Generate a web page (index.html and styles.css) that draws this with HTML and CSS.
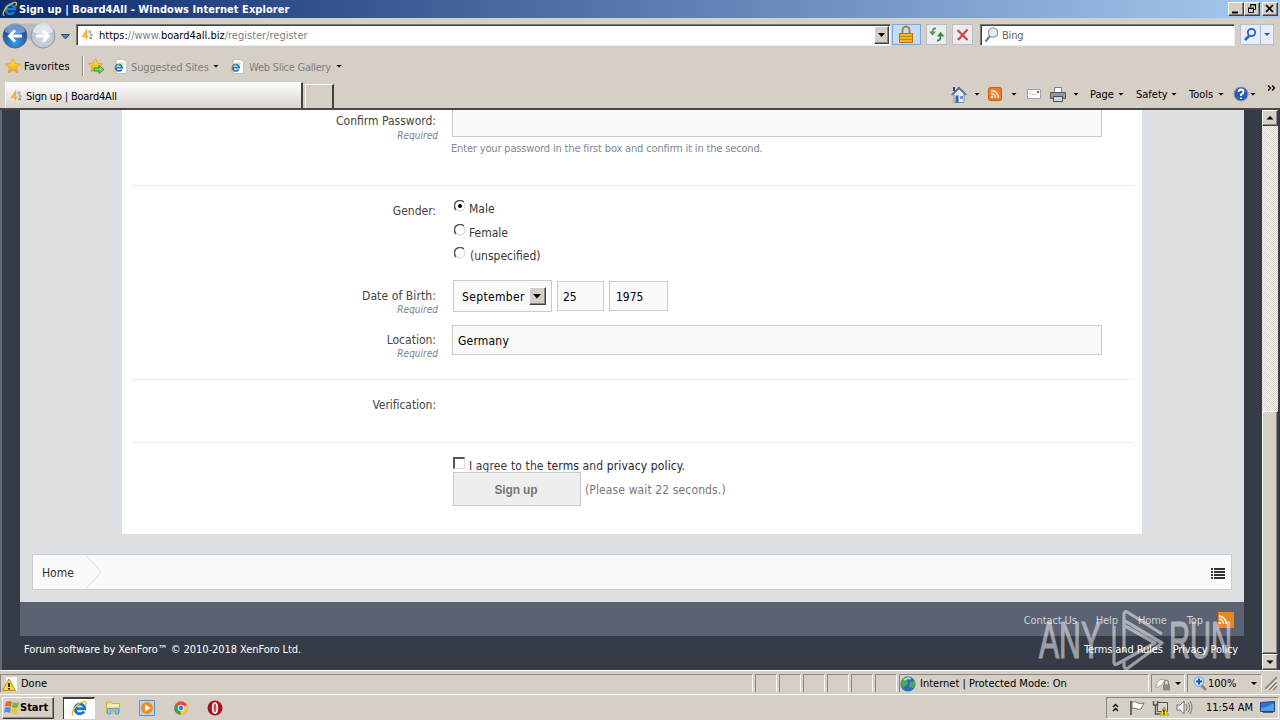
FILE: index.html
```html
<!DOCTYPE html>
<html lang="en">
<head>
<meta charset="utf-8">
<title>Sign up | Board4All</title>
<link rel="stylesheet" href="styles.css">
</head>
<body>
<svg class="defs" width="0" height="0">
  <defs>
    <radialGradient id="blue" cx=".5" cy=".75" r=".7"><stop offset="0" stop-color="#39a0ee"/><stop offset="1" stop-color="#173f86"/></radialGradient>
    <radialGradient id="grey" cx=".5" cy=".6" r=".6"><stop offset="0" stop-color="#d3d9e4"/><stop offset="1" stop-color="#b5bdcb"/></radialGradient>
    <linearGradient id="gold" x2="0" y2="1"><stop offset="0" stop-color="#fff04d"/><stop offset="1" stop-color="#f59a17"/></linearGradient>
    <symbol id="ie" viewBox="0 0 16 16"><path d="M12.2 10.8a4.6 4.6 0 1 1 .7-2.6H5" fill="none" stroke="#1c77c9" stroke-width="2.7"/><path d="M2.4 14.8C-.8 13 3 6.500 8.500 3c3.500-2.200 6-2.300 6-.3 0 .8-.4 1.700-.8 2.400" fill="none" stroke="#e9b82c" stroke-width="1.300"/></symbol>
    <symbol id="iepage" viewBox="0 0 16 16"><path d="M3.500.5h8l3 3v12h-11z" fill="#fff" stroke="#b9bec8"/><svg x="0" y="3" width="12" height="12" viewBox="0 0 16 16"><use href="#ie"/></svg></symbol>
    <symbol id="star" viewBox="0 0 16 16"><path d="M8 .8l2.200 4.700 5.200.7-3.800 3.600 1 5.200L8 12.400 3.400 15l1-5.200L.6 6.200l5.200-.7z" fill="url(#gold)" stroke="#e2a13a"/></symbol>
    <symbol id="site" viewBox="0 0 12 12"><path d="M4.800 11V1.500L1 7.500h6" fill="none" stroke="#f0b23a" stroke-width="1.800"/><circle cx="8.500" cy="2.500" r="1.300" fill="none" stroke="#8595ac"/><circle cx="10" cy="6" r="1.300" fill="none" stroke="#8595ac"/><path d="M8 9.500h3" stroke="#8595ac" stroke-width="2"/></symbol>
    <symbol id="rss" viewBox="0 0 14 14"><rect x=".5" y=".5" width="13" height="13" rx="2" fill="#ef7a22" stroke="#cf5c12"/><circle cx="4" cy="10" r="1.300" fill="#fff"/><path d="M3 6.500A4.500 4.500 0 0 1 7.500 11M3 3.500A7.500 7.500 0 0 1 10.500 11" fill="none" stroke="#fff" stroke-width="1.400"/></symbol>
  </defs>
</svg>

<header class="titlebar">
  <svg class="title-icon" width="16" height="16"><use href="#ie"/></svg>
  <span class="title-text">Sign up | Board4All - Windows Internet Explorer</span>
  <div class="win-buttons">
    <svg width="16" height="14" class="raised"><path d="M3 9.500h6" stroke="#000" stroke-width="2"/></svg>
    <svg width="16" height="14" class="raised"><path d="M5.500 4V1.500h5v5H9M5 2h6M3.500 5.500h5v4h-5zM3 5h6" fill="none" stroke="#000"/></svg>
    <svg width="16" height="14" class="raised close"><path d="M3 2l7 7M10 2L3 9" stroke="#000" stroke-width="1.700"/></svg>
  </div>
</header>

<nav class="navbar">
  <svg class="backfwd" width="72" height="30" viewBox="0 0 72 30">
    <path d="M8 6Q14 3 20 4.500h18q8-1 12 4v12H8z" fill="#b9bac0"/>
    <circle cx="15" cy="17" r="12" fill="url(#blue)" stroke="#536b95"/><path d="M5 13a10 9 0 0 1 20 0q-10 4-20 0" fill="#9bbde8" opacity=".65"/><path d="M22 17H10M15 11.500L9.500 17l5.500 5.500" fill="none" stroke="#fff" stroke-width="2.800"/>
    <circle cx="43" cy="17" r="12" fill="url(#grey)" stroke="#8d97a9"/><path d="M33 13a10 9 0 0 1 20 0q-10 4-20 0" fill="#f3f5f9" opacity=".7"/><path d="M36 17h12M43 11.500l5.500 5.500-5.500 5.500" fill="none" stroke="#fff" stroke-width="2.800"/>
    <path d="M61.500 15.500h8l-4 4.500z" fill="#4a8bc4" stroke="#234e7c"/>
  </svg>
  <div class="address sunken">
    <svg class="addr-icon" width="11" height="12"><use href="#site"/></svg>
    <span class="url"><b>https:</b>//www.<b>board4all.biz</b>/register/register</span>
    <svg class="drop raised" width="15" height="18"><path d="M3 6h7L6.500 10z"/></svg>
  </div>
  <svg class="tool lock" width="29" height="21" viewBox="0 0 29 21"><path d="M10.500 10V6.500a3.500 4 0 0 1 7 0V10" fill="none" stroke="#a7863a" stroke-width="2"/><rect x="7.500" y="9.500" width="13" height="9" fill="#eeb42d" stroke="#b37710"/><path d="M8 12.500h12M8 15.500h12" stroke="#c18718"/></svg>
  <svg class="tool" width="21" height="21" viewBox="0 0 21 21"><path d="M10 4.500Q6.500 4 6.500 8" fill="none" stroke="#4d9a51" stroke-width="1.800"/><path d="M3 7.500h7L6.500 11.500z" fill="#4d9a51"/><path d="M11 16.500q3.500.5 3.500-4" fill="none" stroke="#2c8732" stroke-width="1.800"/><path d="M11 12.500h7.500L14.500 8z" fill="#2c8732"/></svg>
  <svg class="tool" width="21" height="21" viewBox="0 0 21 21"><path d="M5.500 6l10 10M15.500 5.500L6 16" stroke="#cf4b4b" stroke-width="2.400"/></svg>
  <div class="search sunken">
    <svg width="15" height="16" viewBox="0 0 15 16"><path d="M6 9l-4.500 5.500" stroke="#6e747e" stroke-width="2"/><circle cx="9" cy="5.500" r="4.600" fill="#e3eff7" stroke="#8e96a2" stroke-width="1.300"/></svg>
    <span class="bing">Bing</span>
  </div>
  <svg class="tool go" width="34" height="21" viewBox="0 0 34 21"><path d="M9 12l-4 4" stroke="#2a63bd" stroke-width="2.500"/><circle cx="11.500" cy="8.500" r="3.700" fill="#e4eefa" stroke="#2a63bd" stroke-width="1.800"/><path d="M20.500 0v21" stroke="#a6bede"/><path d="M24 9h6l-3 3z" fill="#255da7"/></svg>
</nav>

<div class="favbar">
  <svg class="fav-star" width="16" height="16"><use href="#star"/></svg>
  <span class="fav-text">Favorites</span>
  <i class="fav-sep"></i>
  <svg class="fav-add" width="17" height="17" viewBox="0 0 17 17"><use href="#star" width="15" height="15"/><path d="M6 10h5V7.500l5 4-5 4V13H6z" fill="#7fdc55" stroke="#2d9429"/></svg>
  <svg class="fav-page" width="15" height="15"><use href="#iepage"/></svg>
  <span class="sug-text">Suggested Sites</span>
  <i class="caret"></i>
  <svg class="web-page" width="15" height="15"><use href="#iepage"/></svg>
  <span class="web-text">Web Slice Gallery</span>
  <i class="caret"></i>
</div>

<div class="tabbar">
  <div class="tab"><svg width="11" height="12"><use href="#site"/></svg><span class="tab-text">Sign up | Board4All</span></div>
  <div class="newtab"></div>
  <div class="commands">
    <svg class="c-home" width="16" height="17" viewBox="0 0 16 17"><path d="M3 8v8.500h10V8L8 3z" fill="#e8edf6" stroke="#7d8dab"/><path d="M.7 9L8 1.500 15.300 9" fill="none" stroke="#5268a3" stroke-width="1.500"/><path d="M3 1v4" stroke="#35448a" stroke-width="2"/><path d="M4.500 9.500h3v7h-3z" fill="#3267a8"/><path d="M9 10h3v3H9z" fill="#7798bd"/></svg>
    <i class="caret"></i>
    <svg class="c-rss" width="14" height="14"><use href="#rss"/></svg>
    <i class="caret"></i>
    <svg class="c-mail" width="15" height="11" viewBox="0 0 15 11"><rect x=".5" y=".5" width="13" height="9" fill="#fcfcfc" stroke="#a5a6ad"/><path d="M2 4l5 2 2-1" fill="none" stroke="#c4c8d0"/><path d="M10 2h2v2h-2z" fill="#c64747"/></svg>
    <svg class="c-print" width="16" height="15" viewBox="0 0 16 15"><path d="M4.500.5h7v5h-7z" fill="#fff" stroke="#7b8085"/><path d="M.5 5.500h15v6H.5z" fill="#92989f" stroke="#555a60"/><path d="M3.500 9.500h9v5h-9z" fill="#cdd8e4" stroke="#484e55"/></svg>
    <i class="caret"></i>
    <span class="c-page">Page</span><i class="caret"></i>
    <span class="c-safety">Safety</span><i class="caret"></i>
    <span class="c-tools">Tools</span><i class="caret"></i>
    <svg class="c-help" width="16" height="16" viewBox="0 0 16 16"><circle cx="8" cy="8" r="7" fill="#2d5caf" stroke="#8396bb"/><path d="M5.500 6q0-2.500 2.500-2.500T10.500 6q0 1.500-2.500 2.500v1.500M8 11.500v1.500" fill="none" stroke="#fff" stroke-width="1.800"/></svg>
    <i class="caret"></i>
    <svg class="c-more" width="9" height="6"><path d="M1 .5L3.500 3 1 5.500M5 .5L7.500 3 5 5.500" fill="none" stroke="#000" stroke-width="1.300"/></svg>
  </div>
</div>

<main class="viewport">
  <div class="page">
    <form class="panel">
      <section class="sec s-pass">
        <div class="labels"><label class="label t-confirm">Confirm Password:</label><em>Required</em></div>
        <div class="controls"><div class="field wide cut"></div><p class="hint">Enter your password in the first box and confirm it in the second.</p></div>
      </section>
      <section class="sec s-info">
        <div class="labels"><label class="label t-gender">Gender:</label></div>
        <div class="controls radios">
          <div class="option"><svg width="12" height="12" viewBox="0 0 12 12"><circle cx="6" cy="6" r="5" fill="#fff" stroke="#d3d1cc"/><path d="M2 10A5.200 5.200 0 0 1 9.800 2" fill="none" stroke="#505050" stroke-width="1.400"/><circle cx="6" cy="6" r="2" fill="#000"/></svg><span class="t-male">Male</span></div>
          <div class="option"><svg width="12" height="12" viewBox="0 0 12 12"><circle cx="6" cy="6" r="5" fill="#fff" stroke="#d3d1cc"/><path d="M2 10A5.200 5.200 0 0 1 9.800 2" fill="none" stroke="#505050" stroke-width="1.400"/></svg><span class="t-female">Female</span></div>
          <div class="option"><svg width="12" height="12" viewBox="0 0 12 12"><circle cx="6" cy="6" r="5" fill="#fff" stroke="#d3d1cc"/><path d="M2 10A5.200 5.200 0 0 1 9.800 2" fill="none" stroke="#505050" stroke-width="1.400"/></svg><span class="t-unspec">(unspecified)</span></div>
        </div>
        <div class="labels"><label class="label t-dob">Date of Birth:</label><em>Required</em></div>
        <div class="controls dob">
          <div class="field month"><span class="t-month">September</span><svg class="raised" width="17" height="18"><path d="M3 6h8L7 10.500z"/></svg></div>
          <div class="field day">25</div>
          <div class="field year">1975</div>
        </div>
        <div class="labels"><label class="label t-loc">Location:</label><em>Required</em></div>
        <div class="controls"><div class="field wide loc"><span class="t-germany">Germany</span></div></div>
      </section>
      <section class="sec s-ver">
        <div class="labels"><label class="label t-ver">Verification:</label></div>
      </section>
      <section class="s-submit">
        <div class="agree"><i class="check"></i><span class="t-agree">I agree to the <a>terms</a> and <a>privacy policy</a>.</span></div>
        <div class="submit"><div class="button"><span class="t-sign">Sign up</span></div><span class="t-wait">(Please wait 22 seconds.)</span></div>
      </section>
    </form>
    <div class="crumbs">
      <span class="t-home">Home</span>
      <svg class="crumb-arrow" width="20" height="34" viewBox="0 0 20 34"><path d="M1.500 0l16 17-16 17" fill="none" stroke="#d8dbde"/></svg>
      <svg class="list" width="14" height="11" viewBox="0 0 14 11"><path d="M0 1h2M3 1h11M0 4h2M3 4h11M0 7h2M3 7h11M0 10h2M3 10h11" stroke="#333" stroke-width="2"/></svg>
    </div>
    <footer class="footer">
      <span class="f-contact">Contact Us</span><span class="f-help">Help</span><span class="f-home">Home</span><span class="f-top">Top</span>
      <svg width="16" height="16" viewBox="0 0 16 16"><path d="M0 0h16v16H0z" fill="#e98a20"/><circle cx="1.800" cy="11" r="1.200" fill="#fff"/><path d="M1 7a5 5 0 0 1 4.500 5M1 4a8 8 0 0 1 7.300 8" fill="none" stroke="#fff" stroke-width="1.500"/></svg>
    </footer>
    <div class="legal"><span class="l-forum">Forum software by XenForo™ © 2010-2018 XenForo Ltd.</span><span class="l-terms">Terms and Rules</span><span class="l-priv">Privacy Policy</span></div>
  </div>
  <div class="scroll">
    <svg class="raised" width="16" height="16"><path d="M3.500 8.500h7L7 5z"/></svg>
    <div class="track"></div>
    <div class="thumb"></div>
    <svg class="raised" width="16" height="16"><path d="M3.500 5.500h7L7 9z"/></svg>
  </div>
  <div class="watermark">
    <span class="w-any">ANY</span>
    <svg width="62" height="62" viewBox="0 0 62 62"><path d="M9 17V53Q9 57 12 55L50 34L20 17M19 43V6Q19 1 23 3.500L57 25M20 12L57 34L23 59Q20 61 19 57V52" fill="none" stroke="#fff" stroke-width="3.200" stroke-linejoin="round"/></svg>
    <span class="w-run">RUN</span>
  </div>
</main>

<div class="status">
  <div class="cell done"><svg width="16" height="16" viewBox="0 0 16 16"><path d="M4 1h11v14H4z" fill="#fff"/><path d="M7 3l6.500 11.500H.5z" fill="#f7df28" stroke="#ad9419"/><path d="M7 7v4M7 12v1.500" stroke="#000" stroke-width="1.600"/></svg><span class="st-done">Done</span></div>
  <div class="cell small"></div><div class="cell small"></div><div class="cell small"></div><div class="cell small"></div><div class="cell small"></div><div class="cell small"></div>
  <div class="cell zone"><svg width="16" height="16" viewBox="0 0 16 16"><circle cx="8" cy="8" r="7.500" fill="#286ebb"/><path d="M2 3.500Q6-.5 10 1.500L7 5l1 3-5 4Q0 8 2 3.500M10 6l5-1q1 4-2 7l-4-1z" fill="#4dab54"/><path d="M4 4q4-3 7-1" stroke="#b8e8f4" fill="none" stroke-width="1.500"/></svg><span class="st-zone">Internet | Protected Mode: On</span></div>
  <div class="cell priv"><svg width="18" height="16" viewBox="0 0 18 16"><path d="M1 12C1 5 5 2 10 4l-3 5z" fill="#f4f4f2" stroke="#a5a5a3"/><path d="M9.500 9V6.500a2 2.500 0 0 1 4 0V9" fill="none" stroke="#777"/><path d="M8 8.500h7v6H8z" fill="#8a8a89"/></svg><i class="caret"></i></div>
  <div class="cell zoom"><svg width="15" height="15" viewBox="0 0 15 15"><path d="M8 9l5 5" stroke="#9b835b" stroke-width="2.500"/><circle cx="6" cy="5.500" r="4.800" fill="#cde7fa" stroke="#6e9cc9"/><path d="M3 5.500h6M6 2.500v6" stroke="#135bb0" stroke-width="2"/></svg><span class="st-zoom">100%</span><i class="caret"></i></div>
  <svg class="grip" width="12" height="16"><path d="M0 14L12 2M4 15l8-8M8 15l4-4" stroke="#878580" stroke-width="1.700"/><path d="M2 15L12 5M6 15l6-6" stroke="#fff"/></svg>
</div>

<div class="taskbar">
  <div class="start raised"><svg width="16" height="16" viewBox="0 0 16 16"><path d="M2 2q3-2 6 0L7 7Q4 5 1 7z" fill="#e56a30"/><path d="M9 2q3 2 6 0l-1 5q-3 2-6 0z" fill="#75b83d"/><path d="M1 8q3-2 6 0l-1 5q-3-2-6 0z" fill="#4a94dc"/><path d="M8 8q3 2 6 0l-1 5q-3 2-6 0z" fill="#f2c42c"/></svg><span class="start-text">Start</span></div>
  <div class="active-task"><svg width="17" height="17" viewBox="0 0 16 16"><use href="#ie"/></svg></div>
  <svg class="t-folder" width="16" height="16" viewBox="0 0 16 16"><path d="M1.500 2h5l1 1.500h7V13h-13z" fill="#f4dc7f" stroke="#cfac50"/><path d="M3 5.500h11" stroke="#fff6c8" stroke-width="2"/><path d="M2.500 14V8.500h11V14h-3v-3h-5v3z" fill="#8bc4e8" stroke="#61a0cc"/></svg>
  <svg class="t-media" width="16" height="16" viewBox="0 0 16 16"><path d="M.5.5h15v15H.5z" fill="#b7d6f0" stroke="#5f91bf"/><circle cx="8" cy="8" r="6" fill="#f48a19"/><path d="M6 4.500L11.500 8 6 11.500z" fill="#fff"/></svg>
  <svg class="t-chrome" width="14" height="14" viewBox="0 0 14 14"><circle cx="7" cy="7" r="6.700" fill="#e64b3c"/><path d="M7 7L1.200 3.600A6.700 6.700 0 0 0 6.500 13.700z" fill="#35a353"/><path d="M7 7l6-3a6.700 6.700 0 0 1-6.500 9.700z" fill="#f7cf3a"/><circle cx="7" cy="7" r="3.200" fill="#fff"/><circle cx="7" cy="7" r="2.400" fill="#477fe0"/></svg>
  <svg class="t-opera" width="16" height="16" viewBox="0 0 16 16"><circle cx="8" cy="8" r="7.500" fill="#a5141b"/><ellipse cx="8" cy="8" rx="2.300" ry="5" fill="#d54c50" stroke="#fff" stroke-width="1.700"/></svg>
  <div class="tray">
    <svg class="chev" width="7" height="9"><path d="M1 4L3.500 1.500 6 4M1 8l2.500-2.500L6 8" fill="none" stroke="#000" stroke-width="1.400"/></svg>
    <svg class="flag" width="17" height="16" viewBox="0 0 17 16"><path d="M2 1v14" stroke="#666" stroke-width="2"/><path d="M3 2q4-1 6 1 2 1 6 0l-3 6q-3 1-5-.5-2-1-4 0z" fill="#fff" stroke="#777"/></svg>
    <svg class="net" width="17" height="16" viewBox="0 0 17 16"><path d="M5.500 2.500h10v9h-10z" fill="#d5d5d5" stroke="#555"/><path d="M1.500 1v4h4V1M3.500 5v9h5" fill="none" stroke="#555" stroke-width="1.500"/><path d="M8 15l4-8 4.500 8z" fill="#f5df28" stroke="#b19716"/><path d="M12 9.500v3M12 13v1.200" stroke="#000" stroke-width="1.300"/></svg>
    <svg class="sound" width="17" height="15" viewBox="0 0 17 15"><path d="M1 5h3l4-4v13l-4-4H1z" fill="#fff" stroke="#6d6d6d"/><path d="M10 4q2 3.500 0 7M12 2.500q3.500 5 0 10M14 1q4 6.500 0 13" fill="none" stroke="#777"/></svg>
    <span class="clock">11:54 AM</span>
    <svg class="desk" width="15" height="13" viewBox="0 0 15 13"><path d="M.5 1.500l14-1v10h-14z" fill="#2873c6" stroke="#174987"/><path d="M1 7q7-1 13-5v8H1z" fill="#549ce4"/><path d="M3 11.500h10" stroke="#465e7a"/></svg>
  </div>
</div>
</body>
</html>
```
FILE: styles.css
```css
* { box-sizing: border-box; }
body { margin: 0; width: 1280px; height: 720px; overflow: hidden; background: #d5cfc6; color: #000; font: 11px/14px "DejaVu Sans Condensed", "DejaVu Sans", sans-serif; font-stretch: condensed; }
svg { display: block; flex: none; }
span, label, em, p { white-space: nowrap; flex: none; display: block; }
.defs { position: absolute; }
.raised { background: #d5cfc6; border: 1px solid; border-color: #fff #404040 #404040 #fff; box-shadow: inset -1px -1px #8b8780; }
.sunken { background: #fff; border: 1px solid; border-color: #777 #eee #eee #777; box-shadow: inset 1px 1px #404040; }
.caret { width: 6px; height: 3px; flex: none; background: #000; clip-path: polygon(0 0, 100% 0, 50% 100%); }

.titlebar { height: 18px; background: linear-gradient(90deg, #0c2a6c, #a6caf0); display: flex; align-items: center; padding: 0 2px; }
.title-icon { margin-right: 1px; }
.title-text { width: 271px; color: #fff; font-weight: bold; letter-spacing: .06px; padding-top: 1px; }
.win-buttons { margin-left: auto; display: flex; }
.close { margin-left: 2px; }

.navbar { height: 34px; display: flex; align-items: center; padding-bottom: 1px; }
.backfwd { margin-bottom: 1px; width: 72px; }
.address { margin-left: 4px; width: 815px; height: 22px; display: flex; align-items: center; }
.addr-icon { margin: 0 6px 0 5px; }
.url { color: #808080; margin-top: 2px; }
.url b { font-weight: normal; color: #000; }
.drop { margin-left: auto; margin-right: 1px; }
.tool { margin-left: 7px; background: #ebecee; outline: 1px solid #b7bfcd; outline-offset: -1px; }
.lock { margin-left: 1px; background: #c5dcfa; outline-color: #7da5dc; }
.navbar .lock + .tool { margin-left: 5px; }
.navbar .lock + .tool + .tool { margin-left: 5px; }
.search { margin-left: 7px; width: 255px; height: 22px; display: flex; align-items: center; padding-left: 3px; }
.bing { margin: 3px 0 0 3px; color: #666; letter-spacing: -.2px; }
.go { margin-left: 5px; background: #e6edf6; }

.favbar { height: 28px; display: flex; align-items: center; padding-left: 5px; }
.fav-text { margin-left: 3px; width: 58px; letter-spacing: .12px; padding-top: 1px; }
.fav-sep { width: 2px; height: 20px; border-left: 1px solid #8e8a84; border-right: 1px solid #fff; }
.fav-add { margin-left: 4px; }
.fav-page { margin-left: 8px; }
.sug-text, .web-text { color: #808080; margin-left: 3px; padding-top: 3px; }
.sug-text { width: 82px; letter-spacing: -.15px; }
.web-page { margin-left: 11px; }
.web-text { width: 87px; margin-left: 4px; letter-spacing: -.26px; }

.tabbar { height: 30px; display: flex; border-bottom: 2px solid #484848; padding-left: 5px; }
.tab { margin-top: 2px; width: 298px; height: 26px; display: flex; align-items: center; padding-left: 5px; background: linear-gradient(#fdfdfd, #d9d4ce); border-top: 1px solid #fff; border-left: 1px solid #fff; border-right: 2px solid #404040; }
.tab-text { margin: 2px 0 0 4px; letter-spacing: -.2px; }
.newtab { margin: 4px 0 0 2px; width: 29px; border: 1px solid #fff; border-right: 2px solid #404040; border-bottom: 0; }
.commands { margin-left: auto; display: flex; align-items: center; height: 28px; padding-right: 4px; }
.commands span { padding-top: 1px; }
.commands .caret { margin-left: 7px; }
.c-rss { margin-left: 8px; } .c-mail { margin-left: 10px; } .c-print { margin-left: 8px; }
.commands .c-rss + .caret { margin-left: 9px; }
.c-page { margin-left: 11px; width: 25px; } .c-safety { margin-left: 12px; width: 32px; } .c-tools { margin-left: 12px; width: 26px; }
.commands span + .caret { margin-left: 3px; }
.c-help { margin-left: 9px; }
.commands .c-help + .caret { margin-left: 1px; }
.c-more { margin: 0 0 12px 11px; }

.viewport { position: relative; height: 560px; display: flex; border-left: 2px solid #666a70; background: #363c47; }
.page { width: 1260px; padding: 0 18px; display: flex; flex-direction: column; background: linear-gradient(90deg, #363c47 18px, #dce0e3 18px 1242px, #363c47 1242px); }
.panel { background: #fff; height: 424px; padding: 0 10px; width: 1020px; margin-left: 102px; color: #383838; font-size: 12px; flex: none; }
.sec { display: grid; grid-template-columns: 306px 1fr; border-bottom: 1px solid #ececec; width: 1002px; }
.s-pass { height: 76px; }
.labels { display: flex; flex-direction: column; align-items: flex-end; }
.label { line-height: 15px; margin-right: 2px; color: #444; }
.labels em { font-size: 10px; line-height: 14px; color: #7b8290; }
.s-pass .labels { padding-top: 4px; }
.controls { padding-left: 14px; }
.field { background: #fafafa; border: 1px solid #cacaca; color: #000; }
.wide { width: 650px; height: 30px; }
.cut { height: 27px; border-top: 0; }
.hint { margin: 5px 0 0 -1px; font-size: 11px; color: #7f8694; letter-spacing: -.165px; }
.s-info { height: 194px; grid-template-rows: 93px 45px 54px; }
.s-info .labels { padding-top: 9px; }
.s-info .labels:first-child { padding-top: 18px; }
.t-dob { margin-bottom: -1px; padding-top: 1px; letter-spacing: .1px; }
.t-loc { margin-bottom: -1px; padding-top: 1px; }
.radios { padding: 14px 0 0 16px; }
.option { height: 23.500px; display: flex; align-items: flex-start; }
.option span { margin: 2px 0 0 3px; line-height: 15px; }
.option .t-unspec { margin-left: 4px; }
.dob { display: flex; padding-left: 15px; color: #000; align-items: flex-start; }
.dob .field { display: flex; align-items: center; padding-top: 2px; }
.month { width: 99px; height: 32px; margin-top: 1px; padding-left: 8px; justify-content: space-between; padding-right: 6px; }
.t-month { letter-spacing: .35px; }
.month svg { margin: 0 -1px 3px 0; }
.day { width: 47px; height: 30px; margin: 2px 0 0 5px; padding-left: 5px; }
.year { width: 59px; height: 30px; margin: 2px 0 0 5px; padding-left: 6px; }
.loc { margin-top: 1px; display: flex; align-items: center; padding: 2px 0 0 5px; letter-spacing: .2px; }
.s-info .labels:nth-of-type(5) { padding-top: 8px; }
.s-ver { height: 63px; }
.s-ver .labels { padding-top: 18px; }
.t-ver { letter-spacing: -.05px; }
.s-submit { padding: 14px 0 0 321px; }
.agree { height: 15px; display: flex; }
.check { width: 12px; height: 12px; border: 1px solid #ddd; border-top: 2px solid #555; border-left: 2px solid #555; }
.t-agree { margin: 2px 0 0 4px; letter-spacing: .12px; }
.t-agree a { color: #222; }
.submit { display: flex; align-items: center; height: 34px; }
.button { width: 128px; height: 34px; background: #eee; border: 1px solid #c9c9c9; display: flex; align-items: center; justify-content: center; }
.t-sign { font: bold 12px "Liberation Sans", sans-serif; color: #777; margin: 2px 2px 0 0; letter-spacing: -.15px; }
.t-wait { margin: 2px 0 0 4px; color: #777; letter-spacing: .12px; }
.crumbs { margin: 20px 12px 12px; height: 36px; flex: none; border: 1px solid #c8cbcf; background: #fafafa; display: flex; align-items: center; padding: 0 6px 0 9px; font-size: 12px; color: #333; }
.t-home { width: 42px; padding-top: 2px; }
.list { margin: 2px 0 0 auto; }
.footer { height: 34px; flex: none; background: #5b6272; color: #cfd3db; display: flex; align-items: center; justify-content: flex-end; padding: 2px 10px 0 0; }
.footer span { padding-top: 1px; letter-spacing: -.1px; }
.footer svg { margin: 0 0 1px 15px; }
.f-help { margin-left: 19px; } .f-home { margin-left: 20px; } .f-top { margin-left: 20px; }
.legal { height: 34px; flex: none; margin: 0 -18px; background: #363c47; display: flex; padding: 7px 24px 0 22px; color: #fff; }
.l-forum { letter-spacing: -.06px; }
.l-terms { margin-left: auto; letter-spacing: -.12px; } .l-priv { margin-left: 10px; letter-spacing: -.15px; }
.scroll { width: 16px; height: 560px; display: flex; flex-direction: column; background: #d5cfc6; }
.track { height: 285px; background: repeating-conic-gradient(#fff 0 25%, #d5cfc6 0 50%) 0 0 / 2px 2px; }
.thumb { height: 243px; background: #d5cfc6; border: 1px solid; border-color: #fff #404040 #404040 #fff; box-shadow: inset -1px -1px #8b8780; }
.watermark { position: absolute; left: 1037px; top: 499px; display: flex; color: #fff; opacity: .5; align-items: flex-start; }
.watermark span { font: 52px/54px "Liberation Sans Narrow", "Liberation Sans", sans-serif; transform-origin: 0 0; transform: scaleX(.58); width: 66px; margin-top: 4px; -webkit-text-stroke: 1.2px #fff; }
.watermark .w-run { margin-left: 2px; transform: scaleX(.56); }

.status { height: 25px; border-top: 1px solid #fff; border-bottom: 1px solid #fff; display: flex; padding: 3px 0 2px; }
.cell { border-left: 1px solid #8b8780; border-top: 1px solid #8b8780; border-right: 1px solid #fff; height: 18px; display: flex; align-items: center; margin-right: 2px; flex: none; }
.done { width: 753px; padding-left: 1px; } .st-done { margin-left: 3px; }
.small { width: 22px; }
.zone { width: 250px; padding-left: 0; } .st-zone { margin-left: 4px; }
.priv { width: 34px; padding-left: 3px; } .priv .caret { margin-left: 2px; }
.zoom { width: 75px; padding-left: 5px; } .st-zoom { margin-left: 0; width: 32px; } .zoom .caret { margin-left: 11px; }
.grip { margin: 1px 0 0 1px; }
.taskbar { height: 25px; display: flex; align-items: center; padding-left: 2px; }
.start { width: 52px; height: 22px; display: flex; align-items: center; padding-left: 1px; }
.start-text { font-weight: bold; margin-left: 0; }
.active-task { width: 32px; height: 22px; margin-left: 9px; background: #fff; border-left: 1px solid #404040; border-top: 2px solid #404040; border-right: 1px solid #fff; display: flex; align-items: center; justify-content: center; }
.t-folder { margin-left: 10px; } .t-media { margin-left: 18px; } .t-chrome { margin-left: 19px; } .t-opera { margin-left: 19px; }
.tray { margin-left: auto; width: 173px; height: 22px; margin-right: 1px; border: 1px solid; border-color: #8b8780 #fff #fff #8b8780; display: flex; align-items: center; padding-left: 5px; }
.flag { margin-left: 10px; } .net { margin-left: 6px; } .sound { margin-left: 7px; } .clock { margin-left: 13px; width: 48px; } .desk { margin-left: 6px; }
```
